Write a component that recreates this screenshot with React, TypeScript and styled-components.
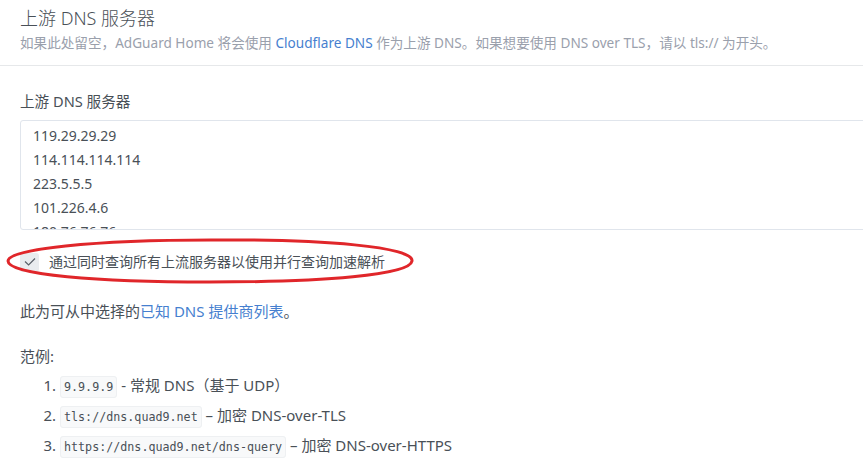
import styled, { createGlobalStyle } from "styled-components";

const GlobalStyle = createGlobalStyle`
  html, body {
    margin: 0;
    padding: 0;
    background: #ffffff;
    overflow: hidden;
  }
  body {
    font-family: "Noto Sans", "Noto Sans CJK SC", sans-serif;
    color: #495057;
  }
`;

const upstreams = [
  "119.29.29.29",
  "114.114.114.114",
  "223.5.5.5",
  "101.226.4.6",
  "180.76.76.76",
];

const examples = [
  { code: "9.9.9.9", text: "- 常规 DNS（基于 UDP）" },
  { code: "tls://dns.quad9.net", text: "– 加密 DNS-over-TLS" },
  { code: "https://dns.quad9.net/dns-query", text: "– 加密 DNS-over-HTTPS" },
];

export default function App() {
  return (
    <Card>
      <GlobalStyle />
      <Header>
        <Title>上游 DNS 服务器</Title>
        <Subtitle>
          如果此处留空，AdGuard Home 将会使用 <Link>Cloudflare DNS</Link> 作为上游
          DNS。如果想要使用 DNS over TLS，请以 tls:// 为开头。
        </Subtitle>
      </Header>
      <Body>
        <FieldLabel>上游 DNS 服务器</FieldLabel>
        <ServersBox>
          {upstreams.map((ip) => (
            <ServerLine key={ip}>{ip}</ServerLine>
          ))}
        </ServersBox>
        <CheckRow>
          <CheckBox>
            <svg width="12" height="10" viewBox="0 0 12 10">
              <path
                d="M1 4.5 L4.6 8 L11 1.5"
                fill="none"
                stroke="#5a6169"
                strokeWidth="1.2"
              />
            </svg>
          </CheckBox>
          <CheckText>通过同时查询所有上流服务器以使用并行查询加速解析</CheckText>
          <Annotation width="414" height="48" viewBox="0 0 414 48">
            <path
              d="M207 3 C320 2 410 10 408 24 C406 38 320 45 205 45 C95 45 4 38 4 24 C4 12 90 3 207 3 Z"
              fill="none"
              stroke="#e0262a"
              strokeWidth="3"
            />
          </Annotation>
        </CheckRow>
        <Paragraph>
          此为可从中选择的<Link>已知 DNS 提供商列表</Link>。
        </Paragraph>
        <ExampleTitle>范例:</ExampleTitle>
        <ExampleList>
          {examples.map((item) => (
            <ExampleItem key={item.code}>
              <Code>{item.code}</Code> {item.text}
            </ExampleItem>
          ))}
        </ExampleList>
      </Body>
    </Card>
  );
}

const Card = styled.div`
  width: 100%;
  background: #fff;
`;

const Header = styled.div`
  padding: 5px 20px 11px;
  border-bottom: 1px solid #e6e8ea;
`;

const Title = styled.h3`
  margin: 0;
  font-size: 18px;
  font-weight: 300;
  line-height: 26px;
  color: #495057;
`;

const Subtitle = styled.div`
  margin-top: 1px;
  font-size: 13.6px;
  line-height: 22px;
  color: #9aa0ac;
  white-space: nowrap;
`;

const Link = styled.a`
  color: #467fcf;
  text-decoration: none;
  cursor: pointer;
`;

const Body = styled.div`
  padding: 24px 20px 0;
`;

const FieldLabel = styled.div`
  font-size: 14.6px;
  line-height: 22px;
  margin-bottom: 8px;
`;

const ServersBox = styled.div`
  width: calc(100% + 40px);
  height: 110px;
  overflow: hidden;
  border: 1px solid #e0e5ec;
  border-radius: 3px 0 0 3px;
  padding: 3px 12px 0;
  box-sizing: border-box;
`;

const ServerLine = styled.div`
  font-size: 14px;
  line-height: 24px;
  color: #495057;
`;

const CheckRow = styled.div`
  position: relative;
  display: flex;
  align-items: center;
  gap: 10px;
  margin-top: 21px;
  height: 22px;
`;

const CheckBox = styled.span`
  width: 19px;
  height: 19px;
  border-radius: 3px;
  background: #e9ecef;
  display: flex;
  align-items: center;
  justify-content: center;
  flex-shrink: 0;
`;

const CheckText = styled.span`
  font-size: 14px;
  line-height: 22px;
`;

const Annotation = styled.svg`
  position: absolute;
  left: -16px;
  top: -14px;
  pointer-events: none;
`;

const Paragraph = styled.p`
  margin: 27px 0 0;
  font-size: 15px;
  line-height: 22px;
`;

const ExampleTitle = styled.p`
  margin: 23px 0 0;
  font-size: 15px;
  line-height: 22px;
`;

const ExampleList = styled.ol`
  margin: 7px 0 0;
  padding-left: 40px;
  font-size: 15px;
`;

const ExampleItem = styled.li`
  height: 22px;
  line-height: 22px;
  margin-bottom: 8px;
`;

const Code = styled.code`
  font-family: "DejaVu Sans Mono", "Liberation Mono", monospace;
  font-size: 11.7px;
  line-height: 1;
  background: #f8f9fa;
  border: 1px solid #eef0f2;
  border-radius: 3px;
  padding: 3px 3px;
  color: #495057;
`;
